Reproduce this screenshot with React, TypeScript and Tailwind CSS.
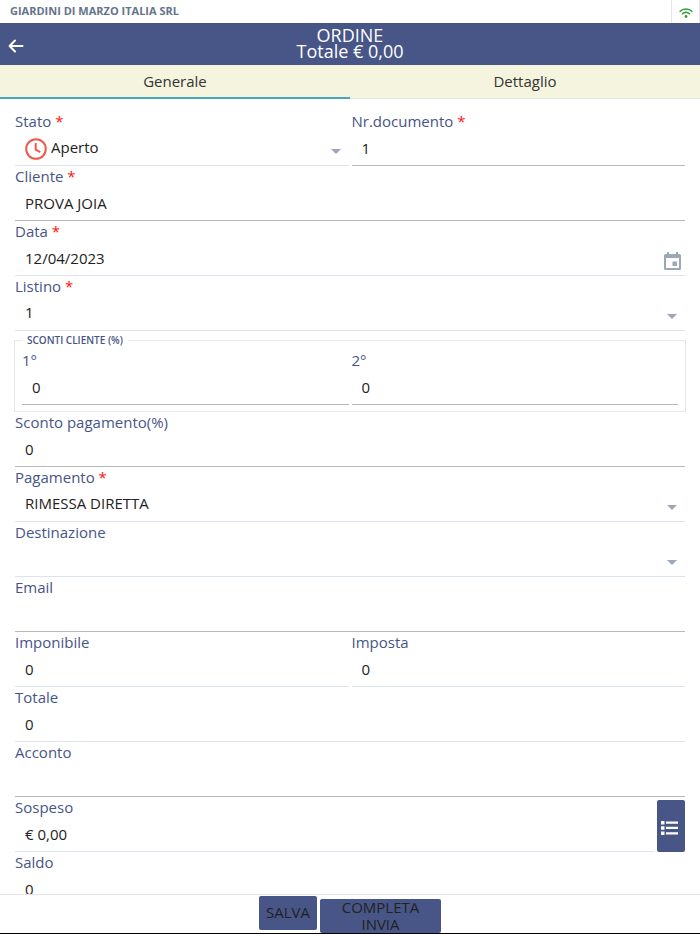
import { useState } from "react";
import type { ReactNode } from "react";
import clsx from "clsx";

const inputClass =
  "min-w-0 flex-1 h-8 pl-[10px] pb-[3px] bg-transparent text-[#222] outline-none";

function Field({
  id,
  label,
  required,
  soft,
  children,
}: {
  id: string;
  label: string;
  required?: boolean;
  soft?: boolean;
  children: ReactNode;
}) {
  return (
    <div className="min-w-0">
      <label htmlFor={id} className="block h-[22px] leading-5 text-[#475587]">
        {label}
        {required && <span className="text-[#f11]"> *</span>}
      </label>
      <div
        className={clsx(
          "relative flex items-center border-b",
          soft ? "border-[#dbe3ee]" : "border-[#b9b9b9]"
        )}
      >
        {children}
      </div>
    </div>
  );
}

function TextField({
  id,
  label,
  value = "",
  required,
  soft,
}: {
  id: string;
  label: string;
  value?: string;
  required?: boolean;
  soft?: boolean;
}) {
  return (
    <Field id={id} label={label} required={required} soft={soft}>
      <input id={id} type="text" defaultValue={value} className={inputClass} />
    </Field>
  );
}

function SelectField({
  id,
  label,
  value,
  required,
  icon,
}: {
  id: string;
  label: string;
  value: string;
  required?: boolean;
  icon?: ReactNode;
}) {
  return (
    <Field id={id} label={label} required={required} soft>
      {icon}
      <select
        id={id}
        defaultValue={value}
        className={clsx(
          "min-w-0 flex-1 h-8 pr-8 pb-[3px] appearance-none bg-transparent text-[#222] outline-none",
          icon ? "pl-1" : "pl-[10px]"
        )}
      >
        <option value={value}>{value}</option>
      </select>
      <svg
        viewBox="0 0 10 5"
        className="pointer-events-none absolute right-2 bottom-[11px] w-[10px] h-[5px] fill-[#9ca8ba]"
      >
        <path d="M0 0h10L5 5z" />
      </svg>
    </Field>
  );
}

function ClockIcon() {
  return (
    <svg viewBox="0 0 22 22" fill="none" className="ml-[10px] w-[22px] h-[22px] shrink-0 stroke-[#f0574b]">
      <circle cx="11" cy="11" r="9.8" strokeWidth="2" />
      <path d="M10.700 5v6.600l4.600 2.600" strokeWidth="2" />
    </svg>
  );
}

export default function App() {
  const [tab, setTab] = useState("Generale");

  return (
    <div className="flex flex-col h-dvh bg-white text-[15px] font-['Open_Sans','Liberation_Sans',sans-serif]">
      <div className="flex h-[23px] shrink-0 items-center justify-between pl-[10px] text-[11px] font-bold text-[#64748b]">
        <span className="pb-px">GIARDINI DI MARZO ITALIA SRL</span>
        <div className="flex h-full w-[29px] items-center justify-center border-x border-[#e5e7eb]">
          <svg viewBox="0 0 14 10" fill="none" className="mt-[2px] w-[14px] h-[10px] stroke-[#2f9e34]">
            <path d="M.6 3.7C4.3.1 9.7.1 13.4 3.7M3.1 6.1c2.3-2.1 5.5-2.1 7.8 0" strokeWidth="1.5" />
            <circle cx="7" cy="8.5" r="1.4" className="fill-[#2f9e34] stroke-none" />
          </svg>
        </div>
      </div>

      <header className="grid h-[42px] shrink-0 grid-cols-[1fr_auto_1fr] items-center bg-[#475587] text-white">
        <button type="button" aria-label="Indietro" className="ml-2 mt-1 justify-self-start">
          <svg viewBox="0 0 16 14" fill="none" className="w-4 h-[14px] stroke-white">
            <path d="M7 1.5L1.6 7L7 12.5M2 7h12.5" strokeWidth="2" strokeLinecap="round" strokeLinejoin="round" />
          </svg>
        </button>
        <h1 className="pb-[2px] text-center text-[18px] leading-4">
          ORDINE
          <br />
          Totale € 0,00
        </h1>
      </header>

      <nav className="grid h-[34px] shrink-0 grid-cols-2 bg-[#f5f5df]">
        {["Generale", "Dettaglio"].map((name) => (
          <button
            key={name}
            type="button"
            onClick={() => setTab(name)}
            className={clsx(
              "text-[#333]",
              tab === name ? "border-b-2 border-[#45a9b8]" : "border-b border-[#dfe6e6] pb-px"
            )}
          >
            {name}
          </button>
        ))}
      </nav>

      <main className="min-h-0 flex-1 overflow-y-auto px-[15px] pt-3 [scrollbar-width:none]">
        <form>
          <div className="grid grid-cols-2 gap-[3px]">
            <SelectField id="stato" label="Stato" value="Aperto" required icon={<ClockIcon />} />
            <TextField id="numero" label="Nr.documento" value="1" required />
          </div>
          <TextField id="cliente" label="Cliente" value="PROVA JOIA" required />
          <Field id="data" label="Data" required soft>
            <input id="data" type="text" defaultValue="12/04/2023" className={inputClass} />
            <button type="button" aria-label="Apri calendario" className="mr-1 mt-1">
              <svg viewBox="0 0 17 18" className="w-[17px] h-[18px] fill-[#9ca8ba]">
                <path
                  fillRule="evenodd"
                  d="M3 0h2v2h7V0h2v2h1.500a1.500 1.500 0 0 1 1.500 1.500v13a1.500 1.500 0 0 1-1.500 1.500h-14A1.500 1.500 0 0 1 0 16.500v-13A1.500 1.500 0 0 1 1.500 2H3zM2 6v10h13V6z"
                />
                <path d="M8.500 9.500h4.500v4.500h-4.500z" />
              </svg>
            </button>
          </Field>
          <SelectField id="listino" label="Listino" value="1" required />

          <fieldset className="-mx-px mt-[3px] border border-[#e8e8ea] px-[7px] pt-1 pb-[6px]">
            <legend className="px-[5px] text-[10px] leading-3 font-semibold text-[#475587]">
              SCONTI CLIENTE (%)
            </legend>
            <div className="grid grid-cols-2 gap-[3px]">
              <TextField id="sconto1" label="1°" value="0" />
              <TextField id="sconto2" label="2°" value="0" />
            </div>
          </fieldset>

          <TextField id="scontoPagamento" label="Sconto pagamento(%)" value="0" />
          <SelectField id="pagamento" label="Pagamento" value="RIMESSA DIRETTA" required />
          <SelectField id="destinazione" label="Destinazione" value="" />
          <TextField id="email" label="Email" />
          <div className="grid grid-cols-2 gap-[3px]">
            <TextField id="imponibile" label="Imponibile" value="0" soft />
            <TextField id="imposta" label="Imposta" value="0" soft />
          </div>
          <TextField id="totale" label="Totale" value="0" soft />
          <TextField id="acconto" label="Acconto" />
          <div className="flex items-end gap-[3px]">
            <div className="min-w-0 flex-1">
              <TextField id="sospeso" label="Sospeso" value="€ 0,00" soft />
            </div>
            <button
              type="button"
              aria-label="Elenco sospesi"
              className="flex h-[52px] w-7 items-center rounded-xs bg-[#475587] pl-1"
            >
              <svg viewBox="0 0 17 14" className="mt-1 w-[17px] h-[14px] fill-white">
                <path d="M0 0h3.500v3.500H0zM0 5.200h3.500v3.500H0zM0 10.500h3.500v3.500H0zM5 .5h12v2.300H5zM5 5.800h12v2.300H5zM5 11.200h12v2.300H5z" />
              </svg>
            </button>
          </div>
          <TextField id="saldo" label="Saldo" value="0" soft />
        </form>
      </main>

      <footer className="flex h-10 shrink-0 items-start justify-center gap-[3px] border-t border-b border-t-[#e5e7eb] border-b-black pt-px text-[#222]">
        <button type="button" className="h-[34px] w-[58px] rounded-xs bg-[#475587] pb-px">
          SALVA
        </button>
        <button type="button" className="h-[34px] w-[121px] self-end rounded-xs bg-[#475587] px-4 pb-[2px] leading-[17px]">
          COMPLETA INVIA
        </button>
      </footer>
    </div>
  );
}
